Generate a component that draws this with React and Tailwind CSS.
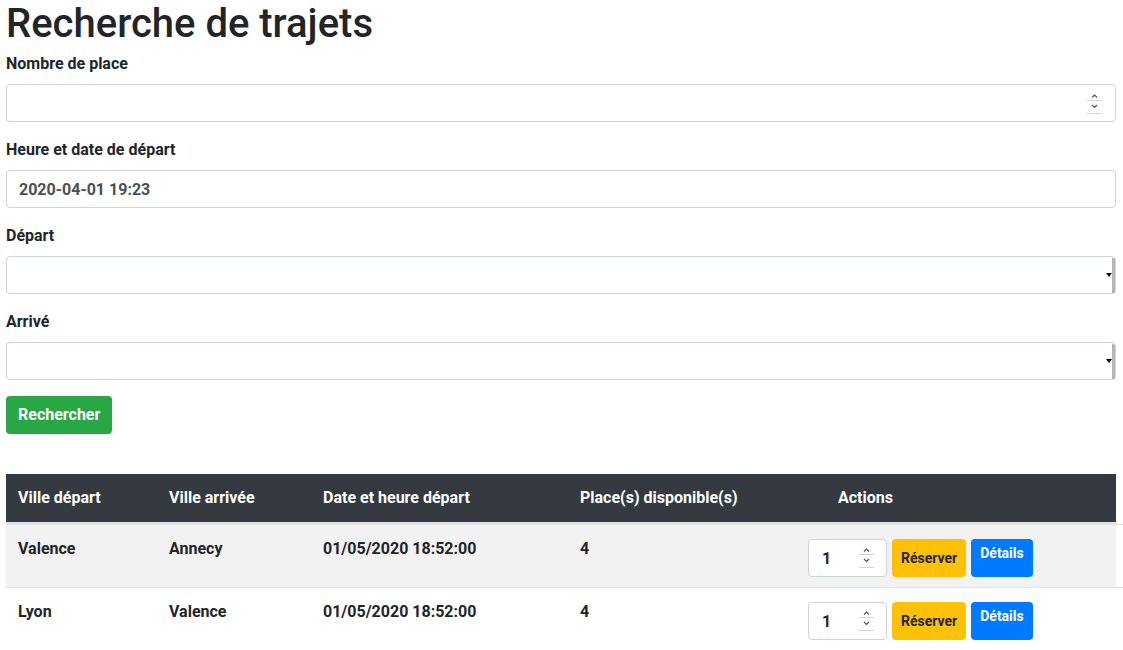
import React from 'react';

const trajets = [
  { depart: 'Valence', arrivee: 'Annecy', date: '01/05/2020 18:52:00', places: 4 },
  { depart: 'Lyon', arrivee: 'Valence', date: '01/05/2020 18:52:00', places: 4 },
];

const inputCls =
  'block w-full h-[38px] px-3 border border-[#ced4da] rounded-[4px] bg-white text-[#495057] text-base font-bold outline-none';

const noSpin =
  '[appearance:textfield] [&::-webkit-inner-spin-button]:appearance-none [&::-webkit-outer-spin-button]:appearance-none';

const Label = ({ children }) => (
  <label className="block mb-2 leading-6 font-bold text-[#212529]">{children}</label>
);

// native-looking number spinner, drawn over the input
const Spinner = ({ className }) => (
  <div className={`absolute pointer-events-none ${className}`}>
    <svg width="15" height="26" viewBox="0 0 15 26" fill="none">
      <path d="M5 7.5 L7.5 5 L10 7.5" stroke="#555" strokeWidth="1.2" />
      <line x1="0" y1="10.5" x2="15" y2="10.5" stroke="#d6d6d6" />
      <path d="M5 15 L7.5 17.5 L10 15" stroke="#555" strokeWidth="1.2" />
      <line x1="0" y1="23.5" x2="15" y2="23.5" stroke="#d6d6d6" />
    </svg>
  </div>
);

const Select = () => (
  <div className="relative">
    <select className={`${inputCls} appearance-none`}>
      <option value=""></option>
    </select>
    <div className="absolute right-[1px] top-[2px] bottom-[1px] w-[3px] bg-[#b4b4b4] rounded-tr-[2px] pointer-events-none" />
    <div className="absolute right-[4px] top-[17px] w-0 h-0 border-l-[3px] border-r-[3px] border-t-[4px] border-l-transparent border-r-transparent border-t-black pointer-events-none" />
  </div>
);

export default function App() {
  return (
    <div className="w-[1123px] min-h-[650px] bg-white text-[#212529] font-['Roboto',sans-serif] text-base leading-6 overflow-hidden">
      <div className="pl-[6px] pr-[7px]">
        <h1 className="text-[40px] leading-[48px] font-medium mb-[4px]">Recherche de trajets</h1>

        <div className="mb-4">
          <Label>Nombre de place</Label>
          <div className="relative">
            <input type="number" className={`${inputCls} ${noSpin}`} />
            <Spinner className="right-[14px] top-[6px]" />
          </div>
        </div>

        <div className="mb-4">
          <Label>Heure et date de départ</Label>
          <input type="text" defaultValue="2020-04-01 19:23" className={inputCls} />
        </div>

        <div className="mb-4">
          <Label>Départ</Label>
          <Select />
        </div>

        <div className="mb-4">
          <Label>Arrivé</Label>
          <Select />
        </div>

        <button className="h-[38px] px-3 rounded-[4px] bg-[#28a745] text-white font-bold">Rechercher</button>
      </div>

      <div className="mt-10 pl-[6px]">
        <div className="flex w-[1110px] bg-[#343a40] text-white font-bold border-b-2 border-[#dee2e6]">
          <div className="w-[151px] p-3">Ville départ</div>
          <div className="w-[154px] p-3">Ville arrivée</div>
          <div className="w-[257px] p-3">Date et heure départ</div>
          <div className="w-[228px] p-3">Place(s) disponible(s)</div>
          <div className="flex-1 py-3 pl-[42px]">Actions</div>
        </div>

        {trajets.map((t, i) => (
          <div key={i} className="border-t border-[#dee2e6] first:border-t-0">
            <div className={`flex w-[1110px] font-bold ${i % 2 === 0 ? 'bg-[#f2f2f2]' : 'bg-white'}`}>
              <div className="w-[151px] p-3">{t.depart}</div>
              <div className="w-[154px] p-3">{t.arrivee}</div>
              <div className="w-[257px] p-3">{t.date}</div>
              <div className="w-[228px] p-3">{t.places}</div>
              <div className="flex-1 pl-3 pt-[14px] pb-[10px] flex items-start gap-[5px]">
                <div className="relative">
                  <input
                    type="number"
                    defaultValue={1}
                    className={`w-[79px] h-[38px] px-[13px] border border-[#ced4da] rounded-[4px] bg-white text-[#212529] font-bold outline-none ${noSpin}`}
                  />
                  <Spinner className="right-[13px] top-[5px]" />
                </div>
                <button className="h-[38px] px-[9px] rounded-[4px] bg-[#ffc107] text-[#212529] font-bold text-[14px]">
                  Réserver
                </button>
                <button className="h-[38px] px-[9px] pt-[2px] rounded-[4px] bg-[#007bff] text-white font-bold text-[14px] flex items-start">
                  Détails
                </button>
              </div>
            </div>
          </div>
        ))}
      </div>
    </div>
  );
}
